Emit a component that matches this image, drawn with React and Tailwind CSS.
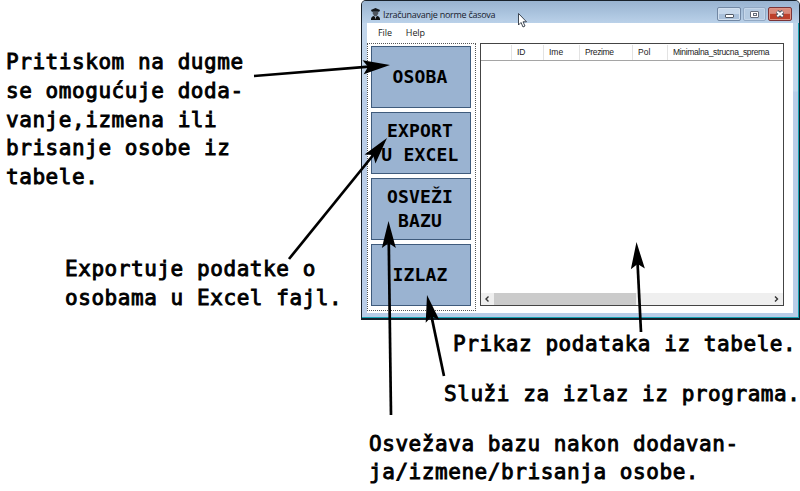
import React from "react";

const note =
  "font-['DejaVu_Sans_Mono',monospace] text-[21px] leading-[28.8px] tracking-[0.56px] whitespace-pre text-black [-webkit-text-stroke:0.9px_#000]";

const buttons = ["OSOBA", "EXPORT\nU EXCEL", "OSVEŽI\nBAZU", "IZLAZ"];

const arrows = [
  { x1: 254, y1: 76, x2: 390, y2: 65 },
  { x1: 289, y1: 259, x2: 387, y2: 138 },
  { x1: 391, y1: 415, x2: 388.5, y2: 221 },
  { x1: 444, y1: 376, x2: 427, y2: 295 },
  { x1: 641, y1: 332, x2: 636.5, y2: 242 },
];

function Arrow({ x1, y1, x2, y2 }) {
  const angle = (Math.atan2(y2 - y1, x2 - x1) * 180) / Math.PI;
  const length = Math.hypot(x2 - x1, y2 - y1);
  return (
    <g transform={`translate(${x2} ${y2}) rotate(${angle})`}>
      <path d={`M${-length} 0H-18`} stroke="#000" strokeWidth="2.7" />
      <path d="M0 0L-27 -7L-22 0L-27 7Z" />
    </g>
  );
}

function TitleBar() {
  return (
    <div className="flex h-[22px] shrink-0 items-start bg-linear-to-b from-[#98b3d0] to-[#bad1e9] pl-2">
      <svg viewBox="0 0 12 14" className="mt-[7px] h-[13px] w-[11px]">
        <path d="M1 2L6 0L11 2L10 4H2Z" fill="#15181c" />
        <path d="M3 4H9V6Q8 9 6 9Q4 9 3 6Z" fill="#50565e" />
        <path d="M1 13Q1 9 4 8.5L6 10L8 8.5Q11 9 11 13Z" fill="#111" />
        <path d="M5.3 10H6.7L6 12Z" fill="#dce7f2" />
      </svg>
      <span className="mt-[7px] ml-[2px] grow font-['Open_Sans',sans-serif] text-[9px] leading-[14px] tracking-[-0.27px] whitespace-nowrap text-[#17202c]">
        Izračunavanje norme časova
      </span>
      <div className="mt-[6px] mr-[7px] flex gap-[2px]">
        <div className="flex h-[14px] w-6 items-center justify-center rounded-[2px] border border-[#7187a3] bg-linear-to-b from-[#c7d8eb] from-50% to-[#a9c0da] to-50% inset-shadow-[0_0_0_1px_#d2e0ef]">
          <span className="mt-[3px] h-1 w-[9px] rounded-[1px] border border-[#535b68] bg-white" />
        </div>
        <div className="flex h-[14px] w-[23px] items-center justify-center rounded-[2px] border border-[#91a8c3] bg-[#b4cae1] inset-shadow-[0_0_0_1px_#c5d6e9]">
          <span className="flex h-[7px] w-[9px] items-center justify-center rounded-[1px] border border-[#656d7b] bg-white">
            <span className="h-[3px] w-1 border border-[#656d7b]" />
          </span>
        </div>
        <div className="flex h-[14px] w-6 items-center justify-center rounded-[2px] border border-[#7b3437] bg-linear-to-b from-[#d98b7c] from-45% to-[#bd402b] to-50% inset-shadow-[0_0_0_1px_#df9484]">
          <svg viewBox="0 0 10 8" className="h-2 w-[10px]">
            <path d="M2 1.5L8 6.5M8 1.5L2 6.5" stroke="#4b5363" strokeWidth="3.6" />
            <path d="M2.2 1.7L7.8 6.3M7.8 1.7L2.2 6.3" stroke="#fff" strokeWidth="1.9" />
          </svg>
        </div>
      </div>
    </div>
  );
}

function HeaderCell({ className, children }) {
  return (
    <div className={`flex shrink-0 items-center border-r border-[#e3e3e3] ${className}`}>
      {children}
    </div>
  );
}

function DataGrid() {
  return (
    <div className="ml-1 flex h-[263px] w-[304px] flex-col border border-[#444] bg-white">
      <div className="flex h-[17px] shrink-0 border-b border-[#a5a5a5] pt-px font-['Liberation_Sans',sans-serif] text-[8.5px] leading-none whitespace-nowrap text-[#222]">
        <HeaderCell className="w-[31px]" />
        <HeaderCell className="w-8 pl-[5px]">ID</HeaderCell>
        <HeaderCell className="w-9 pl-[5px]">Ime</HeaderCell>
        <HeaderCell className="w-[53px] pl-[5px] tracking-[-0.35px]">Prezime</HeaderCell>
        <HeaderCell className="w-[35px] pl-[5px]">Pol</HeaderCell>
        <div className="flex items-center pl-[5px] tracking-[-0.34px]">Minimalna_strucna_sprema</div>
      </div>
      <div className="grow" />
      <div className="flex h-3 shrink-0 items-center bg-[#efefef]">
        <svg viewBox="0 0 13 12" className="h-3 w-[13px]">
          <path d="M7.5 3.5L5 6L7.5 8.5" fill="none" stroke="#333" strokeWidth="1.4" />
        </svg>
        <div className="h-full w-[142px] bg-[#cbcbcb]" />
        <div className="grow" />
        <svg viewBox="0 0 13 12" className="h-3 w-[13px]">
          <path d="M5 3.5L7.5 6L5 8.5" fill="none" stroke="#333" strokeWidth="1.4" />
        </svg>
      </div>
    </div>
  );
}

function AppWindow() {
  return (
    <div className="flex h-80 w-[439px] flex-col overflow-hidden rounded-t-[5px] border border-b-2 border-[#17202a] bg-[#bad1e9]">
      <TitleBar />
      <div className="flex grow flex-col border-r border-b border-[#17a3b3] bg-linear-to-b from-[#c2d6ec] from-[68px] to-[#b9cde8] to-[69px] pr-[5px] pb-1 pl-[5px]">
        <div className="flex grow flex-col bg-white">
          <div className="flex h-[20px] shrink-0 items-center gap-[14px] pl-[11px] font-['Open_Sans',sans-serif] text-[9px] tracking-[-0.1px] text-[#1b1b1b]">
            <span>File</span>
            <span>Help</span>
          </div>
          <div className="flex">
            <div className="flex h-[268px] w-[109px] flex-col gap-1 border border-dotted border-[#555] pt-[2px] pl-[3px]">
              {buttons.map((label) => (
                <button
                  key={label}
                  className="flex h-[62px] w-[100px] shrink-0 items-center justify-center border border-[#3f5b7c] bg-[#9ab3d1] pr-[2px] text-center font-['DejaVu_Sans_Mono',monospace] text-[18px] leading-6 font-bold tracking-[0.2px] whitespace-pre text-black"
                >
                  {label}
                </button>
              ))}
            </div>
            <DataGrid />
          </div>
        </div>
      </div>
    </div>
  );
}

export default function App() {
  return (
    <div className="relative flex h-[491px] w-[800px] overflow-hidden bg-white">
      <div className="flex w-[361px] shrink-0 flex-col pt-12 pl-[6px]">
        <p className={note}>
          {"Pritiskom na dugme\nse omogućuje doda-\nvanje,izmena ili\nbrisanje osobe iz\ntabele."}
        </p>
        <p className={`${note} mt-[63px] ml-[59px]`}>
          {"Exportuje podatke o\nosobama u Excel fajl."}
        </p>
      </div>
      <div className="flex w-[439px] shrink-0 flex-col">
        <AppWindow />
        <p className={`${note} mt-[10px] ml-[92px]`}>Prikaz podataka iz tabele.</p>
        <p className={`${note} mt-[21px] ml-[83px]`}>Služi za izlaz iz programa.</p>
        <p className={`${note} mt-[21px] ml-2`}>
          {"Osvežava bazu nakon dodavan-\nja/izmene/brisanja osobe."}
        </p>
      </div>
      <svg viewBox="0 0 800 491" className="pointer-events-none absolute inset-0 h-[491px] w-[800px]">
        {arrows.map((a) => (
          <Arrow key={a.x1} {...a} />
        ))}
        <path
          d="M518.5 13.5V25L521 22.5L523 27L525 26L523 21.8H526.5Z"
          fill="#fff"
          stroke="#2c3440"
          strokeWidth="0.9"
        />
      </svg>
    </div>
  );
}
